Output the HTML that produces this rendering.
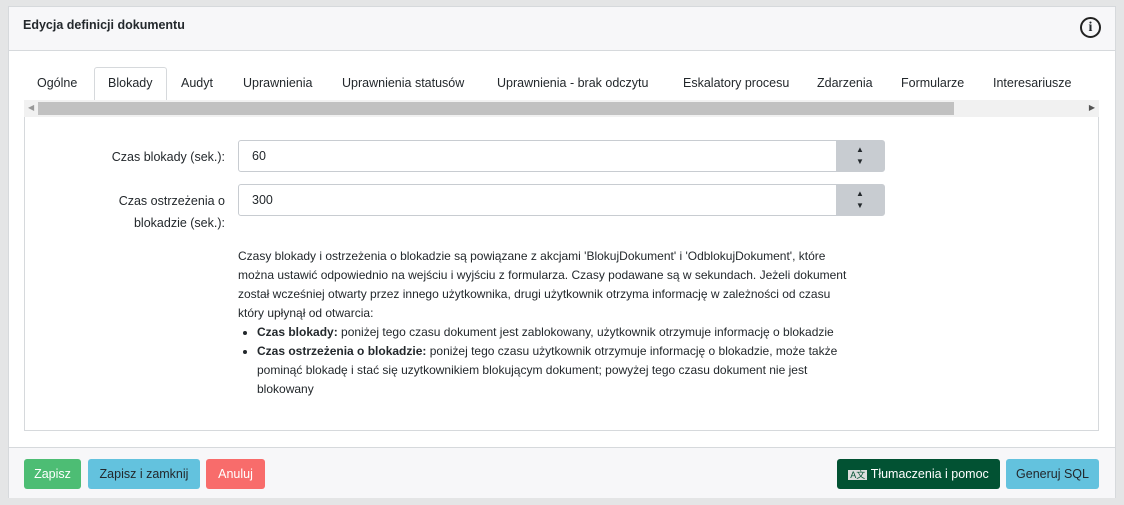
<!DOCTYPE html>
<html><head><meta charset="utf-8"><style>
*{box-sizing:border-box;margin:0;padding:0}
body{width:1124px;height:505px;background:#e4e5e6;font-family:"Liberation Sans",sans-serif;font-size:13px;color:#23282c;position:relative;overflow:hidden}
.card{position:absolute;left:8px;top:6px;width:1108px;height:492px;background:#fff;border:1px solid #d6d9dc}
.hdr{position:absolute;left:0;top:0;width:100%;height:44px;background:#f7f7f9;border-bottom:1px solid #d6d9dc}
.hdr b{position:absolute;left:14px;top:11px;font-size:12.5px}
.info{position:absolute;left:1071px;top:10px;width:21px;height:21px;border:2px solid #222;border-radius:50%;text-align:center;font:bold 14px/17px "Liberation Serif",serif}
.tab{position:absolute;top:69px;font-size:12.5px;color:#23282c}
.tabsel{position:absolute;left:85px;top:60px;width:73px;height:34px;border:1px solid #d6d9dc;border-bottom:none;border-radius:3px 3px 0 0;background:#fff}
.sb{position:absolute;left:15px;top:93px;width:1075px;height:17px;background:#f1f1f1}
.thumb{position:absolute;left:14px;top:2px;width:916px;height:13px;background:#c1c1c1}
.box{position:absolute;left:15px;top:110px;width:1075px;height:314px;border:1px solid #d6d9dc;border-top:none}
.lbl{position:absolute;right:890px;text-align:right;font-size:12.5px;line-height:22px;color:#23282c}
.inp{position:absolute;left:229px;width:647px;height:32px;border:1px solid #c8ccd1;border-radius:3px;background:#fff;font-size:12.5px}
.inp span{position:absolute;left:13px;top:8px}
.spin{position:absolute;right:0;top:0;width:48px;height:30px;background:#c8ccd1;font-size:8px;text-align:center;line-height:12px;padding-top:3px}
.txt{position:absolute;left:229px;top:240px;width:655px;font-size:12px;line-height:19px;color:#23282c}
.txt ul{padding-left:19px}
.ftr{position:absolute;left:0;top:440px;width:100%;height:51px;background:#f7f7f9;border-top:1px solid #d6d9dc}
.btn{position:absolute;top:11px;height:30px;border-radius:3px;font-size:12.5px;line-height:30px;text-align:center}
</style></head><body>
<div class="card">
<div class="hdr"><b>Edycja definicji dokumentu</b><div class="info">i</div></div>
<div class="tabsel"></div>
<div class="tab" style="left:28px">Ogólne</div>
<div class="tab" style="left:99px">Blokady</div>
<div class="tab" style="left:172px">Audyt</div>
<div class="tab" style="left:234px">Uprawnienia</div>
<div class="tab" style="left:333px">Uprawnienia statusów</div>
<div class="tab" style="left:488px">Uprawnienia - brak odczytu</div>
<div class="tab" style="left:674px">Eskalatory procesu</div>
<div class="tab" style="left:808px">Zdarzenia</div>
<div class="tab" style="left:892px">Formularze</div>
<div class="tab" style="left:984px">Interesariusze</div>
<div class="sb"><span style="position:absolute;left:4px;top:3px;font-size:8px;color:#999">◀</span><div class="thumb"></div><span style="position:absolute;right:4px;top:3px;font-size:8px;color:#555">▶</span></div>
<div class="box"></div>
<div class="lbl" style="top:139px">Czas blokady (sek.):</div>
<div class="lbl" style="top:183px">Czas ostrzeżenia o<br>blokadzie (sek.):</div>
<div class="inp" style="top:133px"><span>60</span><div class="spin">▲<br>▼</div></div>
<div class="inp" style="top:177px"><span>300</span><div class="spin">▲<br>▼</div></div>
<div class="txt">Czasy blokady i ostrzeżenia o blokadzie są powiązane z akcjami 'BlokujDokument' i 'OdblokujDokument', które<br>można ustawić odpowiednio na wejściu i wyjściu z formularza. Czasy podawane są w sekundach. Jeżeli dokument<br>został wcześniej otwarty przez innego użytkownika, drugi użytkownik otrzyma informację w zależności od czasu<br>który upłynął od otwarcia:
<ul><li><b>Czas blokady:</b> poniżej tego czasu dokument jest zablokowany, użytkownik otrzymuje informację o blokadzie</li><li><b>Czas ostrzeżenia o blokadzie:</b> poniżej tego czasu użytkownik otrzymuje informację o blokadzie, może także<br>pominąć blokadę i stać się uzytkownikiem blokującym dokument; powyżej tego czasu dokument nie jest<br>blokowany</li></ul></div>
<div class="ftr">
<div class="btn" style="left:15px;width:57px;background:#4dbd74;color:#fff">Zapisz</div>
<div class="btn" style="left:79px;width:112px;background:#63c2de;color:#23282c">Zapisz i zamknij</div>
<div class="btn" style="left:197px;width:59px;background:#f86c6b;color:#fff">Anuluj</div>
<div class="btn" style="left:828px;width:163px;background:#025233;color:#fff"><span style="font-size:9px;background:#ddd;color:#025233;padding:0 2px">A文</span> Tłumaczenia i pomoc</div>
<div class="btn" style="left:997px;width:93px;background:#63c2de;color:#23282c">Generuj SQL</div>
</div>
</div>
</body></html>
